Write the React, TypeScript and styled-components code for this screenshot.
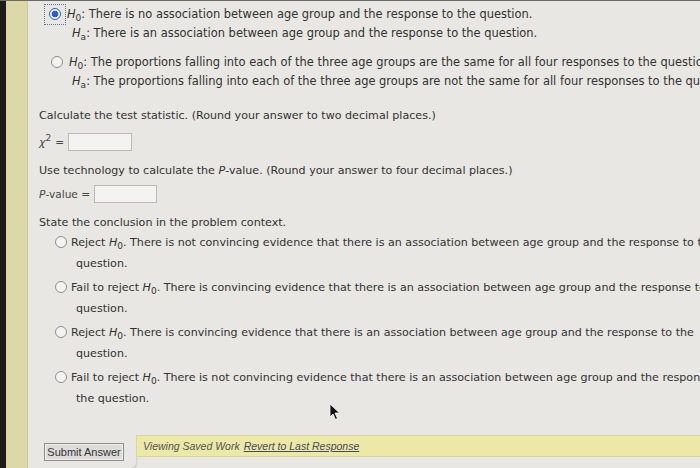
import React from "react";
import styled, { createGlobalStyle } from "styled-components";

const Global = createGlobalStyle`
  html, body { margin: 0; padding: 0; background: #e4e3df; }
  body { font-family: "DejaVu Sans", Verdana, sans-serif; }
`;

const Page = styled.div`
  width: 700px;
  height: 468px;
  display: flex;
  overflow: hidden;
  position: relative;
  background: #e4e3df;
  border-top: 1px solid #6a6a66;
  box-sizing: border-box;
`;

const DarkEdge = styled.div`
  width: 6px;
  background: #1c1c1a;
`;

const YellowStrip = styled.div`
  width: 21px;
  background: #dcd8a7;
  border-right: 1px solid #cfcb98;
`;

const Main = styled.div`
  flex: 1;
  display: flex;
  flex-direction: column;
  min-width: 0;
`;

const Card = styled.div`
  flex: 1;
  display: flex;
  flex-direction: column;
  padding: 5px 0 0 11px;
  color: #323232;
  font-size: 11.1px;
  white-space: nowrap;
  background: #e8e7e3;
`;

const Hyp = styled.div<{ $mt?: number }>`
  display: flex;
  flex-direction: column;
  gap: 3px;
  margin-left: 5px;
  margin-top: ${(p) => p.$mt ?? 0}px;
  font-size: 11.45px;
`;

const Row = styled.div<{ $indent?: number }>`
  display: flex;
  align-items: center;
  height: 16px;
  padding-left: ${(p) => p.$indent ?? 0}px;
`;

const FocusBox = styled.span`
  display: inline-flex;
  align-items: center;
  justify-content: center;
  flex: none;
  width: 20px;
  height: 19px;
  border: 1px dotted #5b6f98;
  margin-right: 1px;
`;

const Radio = styled.span<{ $on?: boolean }>`
  display: inline-block;
  box-sizing: border-box;
  width: 12px;
  height: 12px;
  border-radius: 50%;
  border: 1px solid ${(p) => (p.$on ? "#2a5dd6" : "#8e8e8c")};
  background: ${(p) =>
    p.$on
      ? "radial-gradient(circle, #2a5dd6 0 3.2px, #f2f4fb 3.6px)"
      : "#f3f3f1"};
  flex: none;
`;

const RadioSpacer = styled.span`
  display: inline-block;
  flex: none;
  width: 6px;
`;

const Sym = styled.span`
  font-style: italic;
  sub {
    font-style: normal;
    font-size: 9px;
    vertical-align: -3px;
    line-height: 0;
  }
`;

const Prompt = styled.div<{ $mt: number }>`
  margin-top: ${(p) => p.$mt}px;
  height: 16px;
  display: flex;
  align-items: center;
`;

const AnswerLine = styled.div<{ $mt: number }>`
  display: flex;
  align-items: center;
  gap: 4px;
  margin-top: ${(p) => p.$mt}px;
  font-size: 10.6px;
  color: #474747;
`;

const Input = styled.span<{ $w: number }>`
  display: inline-block;
  width: ${(p) => p.$w}px;
  height: 18px;
  background: #f3f3f1;
  border: 1px solid #b9b9b6;
  box-sizing: border-box;
`;

const Chi = styled.span`
  font-style: italic;
  font-size: 11px;
  sup {
    font-style: normal;
    font-size: 9px;
    vertical-align: 5px;
    line-height: 0;
  }
`;

const Options = styled.div`
  display: flex;
  flex-direction: column;
  gap: 8px;
  margin-top: 4px;
  margin-left: 16px;
`;

const Option = styled.div`
  display: flex;
  flex-direction: column;
  gap: 5px;
`;

const OptLine = styled.div`
  display: flex;
  align-items: center;
  gap: 4px;
  height: 16px;
`;

const Cont = styled.div`
  padding-left: 21px;
  height: 16px;
  display: flex;
  align-items: center;
`;

const Footer = styled.div`
  display: flex;
  align-items: flex-end;
  margin-top: auto;
  height: 34px;
`;

const ButtonArea = styled.div`
  width: 108px;
  height: 30px;
  box-sizing: border-box;
  padding: 0 0 0 16px;
  background: #e8e7e3;
  border-bottom-right-radius: 6px;
  box-shadow: 1px 1px 2px rgba(0, 0, 0, 0.12);
  display: flex;
  align-items: flex-start;
  margin-left: -11px;
`;

const SubmitButton = styled.button`
  font-family: "Liberation Sans", Arial, sans-serif;
  font-size: 11px;
  color: #333;
  width: 80px;
  height: 18px;
  padding: 0;
  margin-top: 5px;
  background: #dcdcda;
  border: 1px solid #8c8c8a;
  box-shadow: inset 0 0 0 1px #f0f0ee;
`;

const SavedBar = styled.div`
  flex: 1;
  height: 20px;
  align-self: flex-start;
  margin-top: 1px;
  background: #ebe8a8;
  border-top: 1px solid #d9d7a0;
  border-bottom: 1px solid #d9d7a0;
  border-left: 1px solid #d9d7a0;
  font-family: "Liberation Sans", Arial, sans-serif;
  font-style: italic;
  font-size: 10.5px;
  color: #555;
  display: flex;
  align-items: center;
  padding-left: 6px;
  gap: 4px;
  a {
    color: #4a4a5a;
    text-decoration: underline;
  }
`;

const Cursor = styled.svg`
  position: absolute;
  left: 329px;
  top: 402px;
`;

const H0 = () => (
  <Sym>
    H<sub>0</sub>
  </Sym>
);
const Ha = () => (
  <Sym>
    H<sub>a</sub>
  </Sym>
);

const conclusions = [
  {
    lead: "Reject",
    line1:
      " There is not convincing evidence that there is an association between age group and the response to the",
    line2: "question.",
  },
  {
    lead: "Fail to reject",
    line1:
      " There is convincing evidence that there is an association between age group and the response to the",
    line2: "question.",
  },
  {
    lead: "Reject",
    line1:
      " There is convincing evidence that there is an association between age group and the response to the",
    line2: "question.",
  },
  {
    lead: "Fail to reject",
    line1:
      " There is not convincing evidence that there is an association between age group and the response to",
    line2: "the question.",
  },
];

export default function App() {
  return (
    <>
      <Global />
      <Page>
        <DarkEdge />
        <YellowStrip />
        <Main>
          <Card>
            <Hyp>
              <Row>
                <FocusBox>
                  <Radio $on />
                </FocusBox>
                <H0 />: There is no association between age group and the response to the question.
              </Row>
              <Row $indent={28}>
                <Ha />: There is an association between age group and the response to the question.
              </Row>
            </Hyp>
            <Hyp $mt={13}>
              <Row $indent={7}>
                <Radio />
                <RadioSpacer />
                <H0 />: The proportions falling into each of the three age groups are the same for all four responses to the question.
              </Row>
              <Row $indent={28}>
                <Ha />: The proportions falling into each of the three age groups are not the same for all four responses to the question.
              </Row>
            </Hyp>
            <Prompt $mt={18}>
              Calculate the test statistic. (Round your answer to two decimal places.)
            </Prompt>
            <AnswerLine $mt={10}>
              <Chi>
                χ<sup>2</sup>
              </Chi>
              =
              <Input $w={64} />
            </AnswerLine>
            <Prompt $mt={11}>
              Use technology to calculate the&nbsp;<i>P</i>-value. (Round your answer to four decimal places.)
            </Prompt>
            <AnswerLine $mt={7}>
              <span>
                <i>P</i>-value =
              </span>
              <Input $w={63} />
            </AnswerLine>
            <Prompt $mt={11}>State the conclusion in the problem context.</Prompt>
            <Options>
              {conclusions.map((c, i) => (
                <Option key={i}>
                  <OptLine>
                    <Radio />
                    <span>
                      {c.lead} <H0 />.{c.line1}
                    </span>
                  </OptLine>
                  <Cont>{c.line2}</Cont>
                </Option>
              ))}
            </Options>
            <Footer>
              <ButtonArea>
                <SubmitButton>Submit Answer</SubmitButton>
              </ButtonArea>
              <SavedBar>
                Viewing Saved Work <a>Revert to Last Response</a>
              </SavedBar>
            </Footer>
          </Card>
        </Main>
        <Cursor width="12" height="18" viewBox="0 0 12 18">
          <path d="M1 1 L1 14 L4 11 L6.5 16.5 L8.5 15.5 L6 10 L10.5 10 Z" fill="#111" stroke="#fff" strokeWidth="0.8" />
        </Cursor>
      </Page>
    </>
  );
}
